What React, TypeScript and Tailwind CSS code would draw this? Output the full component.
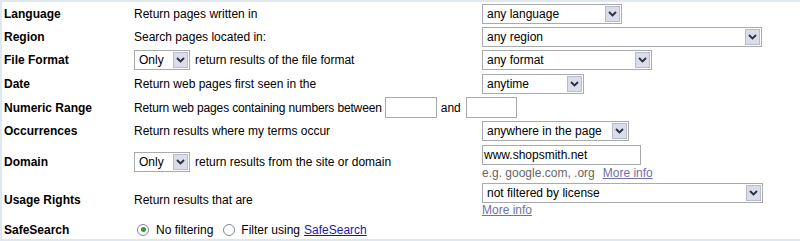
import React from "react";

const Chevron = () => (
  <svg width="9" height="6" viewBox="0 0 9 6">
    <path d="M1 1 L4.5 4.5 L8 1" fill="none" stroke="#2b2f3a" strokeWidth="1.8" />
  </svg>
);

const FakeSelect = ({ value, width }: { value: string; width: string }) => (
  <div
    className={`${width} h-[20px] flex items-center justify-between border border-[#a7abb0] bg-white pl-[4px] pr-[1px]`}
  >
    <span className="whitespace-nowrap">{value}</span>
    <div className="w-[15px] h-[16px] flex items-center justify-center border border-[#b7bccb] bg-[#dadcea]">
      <Chevron />
    </div>
  </div>
);

const Radio = ({ checked }: { checked?: boolean }) => (
  <div className="w-[12px] h-[12px] rounded-full border border-[#7b8a9a] bg-white flex items-center justify-center">
    {checked && <div className="w-[5px] h-[5px] rounded-full bg-[#2f9a2f]" />}
  </div>
);

const Label = ({ children }: { children: React.ReactNode }) => (
  <div className="font-bold">{children}</div>
);

const App = () => {
  return (
    <div className="w-[800px] h-[241px] bg-white border-t-2 border-b-2 border-l-2 border-[#dfe7ef] pl-[2px] text-[12px] text-black font-['Liberation_Sans',Arial,sans-serif] overflow-hidden">
      <div className="grid grid-cols-[130px_348px_1fr] items-center">
        {/* Language */}
        <div className="h-[23px] flex items-center"><Label>Language</Label></div>
        <div>Return pages written in</div>
        <div><FakeSelect value="any language" width="w-[140px]" /></div>

        {/* Region */}
        <div className="h-[23px] flex items-center"><Label>Region</Label></div>
        <div>Search pages located in:</div>
        <div><FakeSelect value="any region" width="w-[280px]" /></div>

        {/* File Format */}
        <div className="h-[24px] flex items-center"><Label>File Format</Label></div>
        <div className="flex items-center gap-[5px]">
          <FakeSelect value="Only" width="w-[56px]" />
          <span>return results of the file format</span>
        </div>
        <div><FakeSelect value="any format" width="w-[170px]" /></div>

        {/* Date */}
        <div className="h-[24px] flex items-center"><Label>Date</Label></div>
        <div>Return web pages first seen in the</div>
        <div><FakeSelect value="anytime" width="w-[102px]" /></div>

        {/* Numeric Range */}
        <div className="h-[23px] flex items-center"><Label>Numeric Range</Label></div>
        <div className="col-span-2 flex items-center">
          <span className="tracking-[-0.15px]">Return web pages containing numbers between</span>
          <div className="ml-[3px] w-[52px] h-[21px] border border-[#a7abb0] bg-white" />
          <span className="ml-[4px]">and</span>
          <div className="ml-[5px] w-[51px] h-[21px] border border-[#a7abb0] bg-white" />
        </div>

        {/* Occurrences */}
        <div className="h-[24px] flex items-center"><Label>Occurrences</Label></div>
        <div>Return results where my terms occur</div>
        <div><FakeSelect value="anywhere in the page" width="w-[147px]" /></div>

        {/* Domain */}
        <div className="h-[38px] flex items-center"><Label>Domain</Label></div>
        <div className="flex items-center gap-[5px]">
          <FakeSelect value="Only" width="w-[56px]" />
          <span>return results from the site or domain</span>
        </div>
        <div className="flex flex-col">
          <div className="w-[159px] h-[20px] flex items-center border border-[#a7abb0] bg-white pl-[1px]">
            www.shopsmith.net
          </div>
          <div className="h-[14px] flex items-center text-[#666666] mt-[1px]">
            <span>e.g. google.com, .org</span>
            <a className="ml-[8px] text-[#7171a8] underline">More info</a>
          </div>
        </div>

        {/* Usage Rights */}
        <div className="h-[38px] flex items-center"><Label>Usage Rights</Label></div>
        <div>Return results that are</div>
        <div className="flex flex-col">
          <FakeSelect value="not filtered by license" width="w-[281px]" />
          <a className="h-[14px] flex items-center text-[#7171a8] underline">More info</a>
        </div>

        {/* SafeSearch */}
        <div className="h-[21px] flex items-center"><Label>SafeSearch</Label></div>
        <div className="col-span-2 flex items-center pl-[3px]">
          <Radio checked />
          <span className="ml-[7px]">No filtering</span>
          <div className="ml-[10px]"><Radio /></div>
          <span className="ml-[6px]">Filter using</span>
          <a className="ml-[4px] text-[#1a1aa6] underline">SafeSearch</a>
        </div>
      </div>
    </div>
  );
};

export default App;
